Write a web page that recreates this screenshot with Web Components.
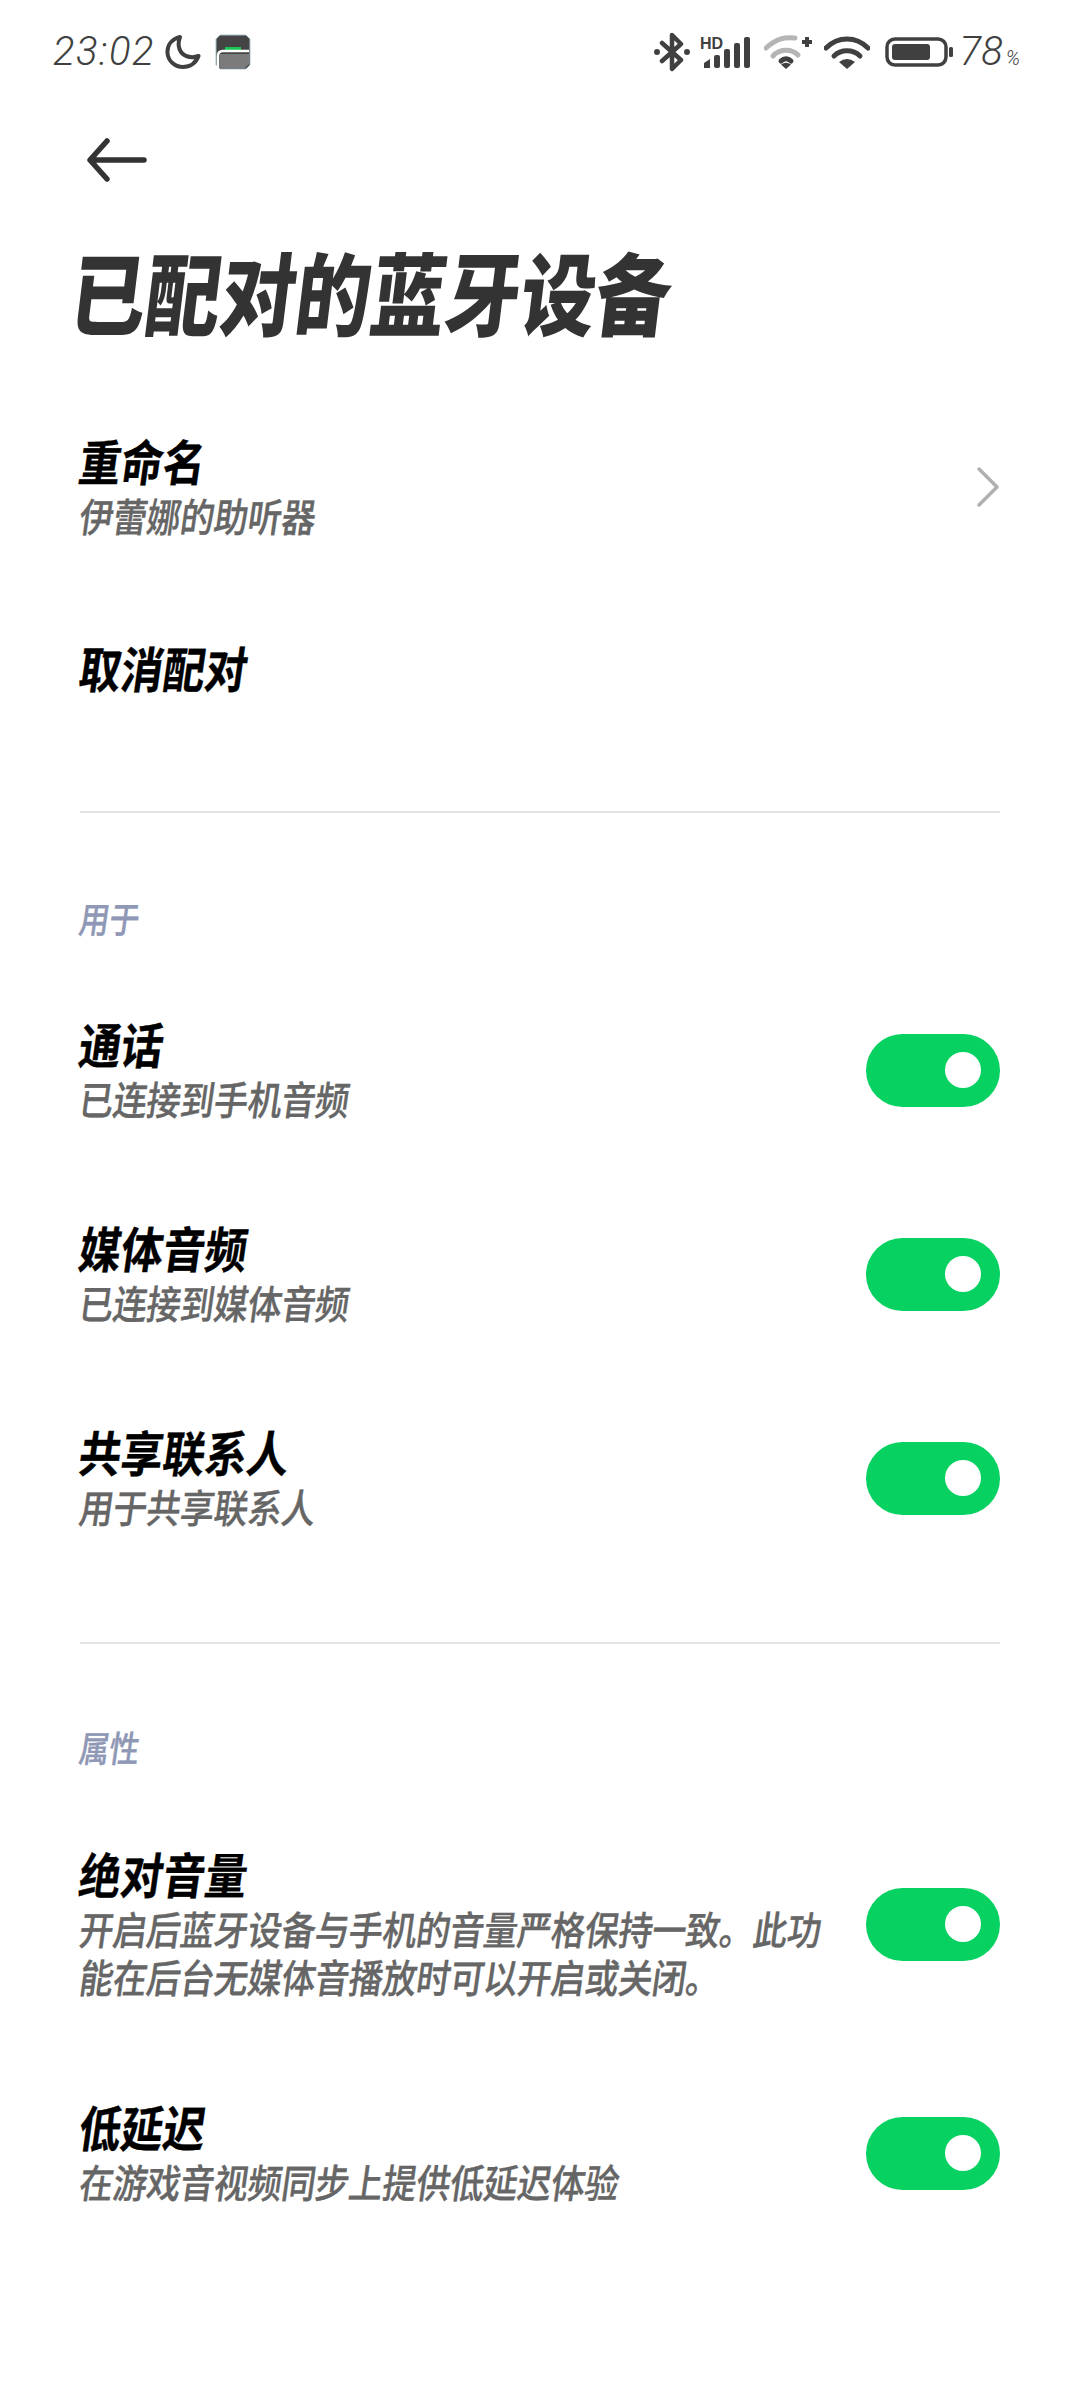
<!DOCTYPE html>
<html lang="zh">
<head>
<meta charset="utf-8">
<title>已配对的蓝牙设备</title>
<style>
  html, body { margin: 0; background: #fff; }
  body { width: 1080px; height: 2400px; overflow: hidden; font-family: "Noto Sans CJK SC", "Noto Sans", sans-serif; }
</style>
</head>
<body>
<status-bar></status-bar>
<page-header heading="已配对的蓝牙设备"></page-header>
<settings-list style="--top:39px;--gap:4px">
  <setting-row heading="重命名" sub="伊蕾娜的助听器" control="chevron"></setting-row>
  <setting-row heading="取消配对"></setting-row>
</settings-list>
<list-divider style="--top:66px"></list-divider>
<section-label style="--top:82px">用于</section-label>
<settings-list style="--top:25px">
  <setting-row heading="通话" sub="已连接到手机音频" control="toggle"></setting-row>
  <setting-row heading="媒体音频" sub="已连接到媒体音频" control="toggle"></setting-row>
  <setting-row heading="共享联系人" sub="用于共享联系人" control="toggle"></setting-row>
</settings-list>
<list-divider style="--top:62px"></list-divider>
<section-label style="--top:80px">属性</section-label>
<settings-list style="--top:26px;--gap:1px">
  <setting-row heading="绝对音量" sub="开启后蓝牙设备与手机的音量严格保持一致。此功|能在后台无媒体音播放时可以开启或关闭。" control="toggle"></setting-row>
  <setting-row heading="低延迟" sub="在游戏音视频同步上提供低延迟体验" control="toggle"></setting-row>
</settings-list>

<script>
class StatusBar extends HTMLElement {
  constructor () {
    super()
    this.attachShadow({ mode: 'open' })
  }

  connectedCallback () {
    this.shadowRoot.innerHTML = /* html */`
      <style>
        :host { display: flex; align-items: center; height: 104px; padding: 0 60px 0 53px; color: #404040; font-family: Roboto, "Noto Sans", sans-serif; }
        svg { display: block; flex: none; }
        .time { font-size: 40px; font-weight: 300; font-style: italic; line-height: 1; width: 112px; letter-spacing: 1.500px; }
        .pct { font-size: 40px; font-weight: 300; font-style: italic; line-height: 1; margin-left: 6px; }
        .pct small { font-size: 20px; margin-left: 3px; }
        .spacer { flex: 1; }
      </style>
      <span class="time">23:02</span>
      <svg width="36" height="36" viewBox="0 0 36 36" fill="none" stroke="#404040" stroke-width="4" stroke-linecap="round" stroke-linejoin="round"><path d="M15 3C7 5 2 11 2.500 19C3 27 10 33 18 33C25 33 31 29 33.500 22C25 25 17 22 14.500 15C13 11 13.500 7 15 3Z"/></svg>
      <svg style="margin-left:14px" width="36" height="36" viewBox="0 0 36 36"><path d="M5 1H31L35 5V31L31 35H5L1 31V5Z" fill="#444" stroke="#a9c2c8" stroke-width="1"/><rect x="10" y="13" width="16" height="4" fill="#17c653"/><path d="M3 34V22Q3 17 8 17H34" fill="none" stroke="#fff" stroke-width="2.500"/><path d="M5 20H34V30L30 34H5Z" fill="#7b7b7b"/></svg>
      <span class="spacer"></span>
      <svg width="36" height="40" viewBox="0 0 36 40" fill="none" stroke="#404040" stroke-width="4.500" stroke-linecap="round" stroke-linejoin="round"><path d="M8 11L27 28L18 37V3L27 12L8 29"/><circle cx="3" cy="20" r="1.500" fill="#404040" stroke-width="3"/><circle cx="33" cy="20" r="1.500" fill="#404040" stroke-width="3"/></svg>
      <svg style="margin-left:9px" width="52" height="32" viewBox="0 0 52 32"><text x="1" y="13" font-family="Liberation Sans" font-weight="700" font-size="16" fill="#404040">HD</text><g fill="#404040"><path d="M5 32V27L11 23V32Z"/><rect x="15" y="19" width="6" height="13" rx="2"/><rect x="25" y="13" width="6" height="19" rx="2"/><rect x="35" y="7" width="6" height="25" rx="2"/><rect x="45" y="1" width="6" height="31" rx="2"/></g></svg>
      <svg style="margin-left:13px" width="50" height="34" viewBox="0 0 50 34" fill="none" stroke-width="5" stroke-linecap="round"><path d="M2 13C13 3 21 2 31 3" stroke="#b5b5b5"/><path d="M9 21C15 14 27 13 34 20" stroke="#b5b5b5"/><path d="M17 26C20 23 24 23 27 26" stroke="#404040"/><path d="M22 34L17 29.500Q22 26 27 29.500Z" fill="#404040" stroke="none"/><path d="M38 7H48M43 2V12" stroke="#404040" stroke-width="4" stroke-linecap="butt"/></svg>
      <svg style="margin-left:10px" width="46" height="34" viewBox="0 0 46 34" fill="none" stroke="#404040" stroke-width="5" stroke-linecap="round"><path d="M2 13C14 1 32 1 44 13"/><path d="M10 21C17 14 29 14 36 21"/><path d="M23 34L15 27Q23 21 31 27Z" fill="#404040" stroke="none"/></svg>
      <svg style="margin-left:15px" width="69" height="30" viewBox="0 0 69 30" fill="none"><rect x="2" y="2" width="59" height="26" rx="8" stroke="#404040" stroke-width="3.500"/><rect x="7" y="7" width="38" height="16" rx="3" fill="#404040"/><rect x="64" y="10" width="4" height="10" rx="1.500" fill="#404040"/></svg>
      <span class="pct">78<small>%</small></span>
    `
  }
}
customElements.define('status-bar', StatusBar)

class PageHeader extends HTMLElement {
  constructor () {
    super()
    this.attachShadow({ mode: 'open' })
  }

  connectedCallback () {
    this.shadowRoot.innerHTML = /* html */`
      <style>
        :host { display: block; padding: 34px 76px 0 72px; color: #333; }
        svg { display: block; margin-left: 15px; }
        h1 { margin: 64px 0 0; font-size: 75px; line-height: 100px; font-weight: 900; white-space: nowrap; transform: translateY(-5px) skewX(-7deg) scaleY(1.2); transform-origin: left center; }
      </style>
      <svg width="60" height="44" viewBox="0 0 60 44" fill="none" stroke="#333" stroke-width="5.500" stroke-linecap="round" stroke-linejoin="round"><path d="M57 22H4M20 3L3 22L20 41"/></svg>
      <h1>${this.getAttribute('heading')}</h1>
    `
  }
}
customElements.define('page-header', PageHeader)

class SettingsList extends HTMLElement {
  constructor () {
    super()
    this.attachShadow({ mode: 'open' }).innerHTML = /* html */`
      <style>
        :host { display: flex; flex-direction: column; gap: var(--gap, 0); margin-top: var(--top, 0); }
      </style>
      <slot></slot>
    `
  }
}
customElements.define('settings-list', SettingsList)

class SettingRow extends HTMLElement {
  constructor () {
    super()
    this.attachShadow({ mode: 'open' })
  }

  connectedCallback () {
    const sub = this.getAttribute('sub')
    const control = this.getAttribute('control')
    let side = ''
    if (control === 'toggle') side = '<span class="toggle"></span>'
    if (control === 'chevron') {
      side = '<svg width="24" height="42" viewBox="0 0 24 42" fill="none" stroke="#b0b0b0" stroke-width="3.500" stroke-linecap="round" stroke-linejoin="round"><path d="M3 3L21 21L3 39"/></svg>'
    }
    const lines = sub ? sub.split('|').map(line => `<div class="sub">${line}</div>`).join('') : ''
    this.shadowRoot.innerHTML = /* html */`
      <style>
        :host { display: flex; align-items: center; justify-content: space-between; padding: 48px 80px; }
        .text { flex: 1; min-width: 0; white-space: nowrap; }
        .heading { font-size: 42px; line-height: 56px; font-weight: 700; color: #000; -webkit-text-stroke: 0.3px #000; transform: translateY(-1px) skewX(-8deg) scaleY(1.16); transform-origin: left center; margin-bottom: 4px; }
        .heading:last-child { margin-bottom: 0; transform: translateY(-2px) skewX(-8deg) scaleY(1.16); }
        .sub { font-size: 34px; line-height: 48px; font-weight: 500; color: #666; -webkit-text-stroke: 0.3px #666; letter-spacing: -0.3px; transform: translateY(-1px) skewX(-8deg) scaleY(1.16); transform-origin: left center; }
        .toggle { flex: none; position: relative; width: 134px; height: 73px; border-radius: 37px; background: #07d160; }
        .toggle::after { content: ""; position: absolute; right: 19px; top: 18px; width: 36px; height: 36px; border-radius: 50%; background: #fff; }
      </style>
      <div class="text">
        <div class="heading">${this.getAttribute('heading')}</div>
        ${lines}
      </div>
      ${side}
    `
  }
}
customElements.define('setting-row', SettingRow)

class ListDivider extends HTMLElement {
  constructor () {
    super()
    this.attachShadow({ mode: 'open' }).innerHTML = /* html */`
      <style>
        :host { display: block; height: 2px; margin: var(--top, 0) 80px 0; background: #e4e4e4; }
      </style>
    `
  }
}
customElements.define('list-divider', ListDivider)

class SectionLabel extends HTMLElement {
  constructor () {
    super()
    this.attachShadow({ mode: 'open' }).innerHTML = /* html */`
      <style>
        :host { display: block; margin: 0 80px; padding-top: var(--top, 0); color: #8f98b5; }
        div { font-size: 30px; line-height: 48px; font-weight: 500; -webkit-text-stroke: 0.3px #8f98b5; transform: translateY(-2px) skewX(-8deg) scaleY(1.2); transform-origin: left center; }
      </style>
      <div><slot></slot></div>
    `
  }
}
customElements.define('section-label', SectionLabel)
</script>
</body>
</html>
